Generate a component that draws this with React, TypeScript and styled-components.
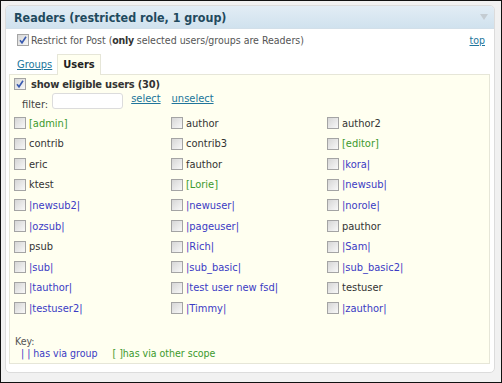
import React from "react";
import styled, { createGlobalStyle } from "styled-components";

const GlobalStyle = createGlobalStyle`
  html, body {
    margin: 0;
    padding: 0;
    background: #000;
  }
  body {
    font-family: "DejaVu Sans Condensed", "DejaVu Sans", Verdana, sans-serif;
    font-stretch: condensed;
  }
`;

const Frame = styled.div`
  box-sizing: border-box;
  width: 502px;
  height: 383px;
  border: 1px solid #111;
  background: #f1f1f1;
  padding: 4px 6px 9px 4px;
  display: flex;
`;

const Panel = styled.div`
  flex: 1;
  border: 1px solid #dcdcdc;
  border-radius: 5px;
  background: #fff;
  display: flex;
  flex-direction: column;
  overflow: hidden;
`;

const Header = styled.div`
  height: 22px;
  display: flex;
  align-items: center;
  justify-content: space-between;
  padding: 0 6px 0 8px;
  background: linear-gradient(#e2edf5, #d0e2ee);
  color: #1f4a5e;
  font-size: 12.4px;
  font-weight: bold;
  border-bottom: 1px solid #d2dfe9;
`;

const Toggle = styled.span`
  width: 0;
  height: 0;
  border-left: 4px solid transparent;
  border-right: 4px solid transparent;
  border-top: 6px solid #c4ccd2;
`;

const Body = styled.div`
  flex: 1;
  display: flex;
  flex-direction: column;
  padding: 3px 4px 8px 3px;
  font-size: 10.5px;
  color: #555;
`;

const RestrictRow = styled.div`
  display: flex;
  align-items: center;
  justify-content: space-between;
  padding: 0 5px 0 8px;
  height: 16px;
`;

const Label = styled.label`
  display: flex;
  align-items: center;
  gap: 2px;
`;

const Strong = styled.b`
  color: #333;
  letter-spacing: -0.3px;
`;

const Link = styled.a`
  color: #21759b;
  text-decoration: underline;
  cursor: pointer;
`;

const Tabs = styled.div`
  display: flex;
  align-items: flex-end;
  margin-top: 6px;
  padding-left: 8px;
  font-size: 11px;
`;

const TabLink = styled(Link)`
  padding: 0 5px 3px 0;
`;

const ActiveTab = styled.div`
  background: #fffff0;
  border: 1px solid #e6e6d8;
  border-bottom: none;
  padding: 3px 5px 4px 5px;
  font-weight: bold;
  color: #222;
  margin-bottom: -1px;
  position: relative;
`;

const Content = styled.div`
  flex: 1;
  background: #fffff0;
  border: 1px solid #e6e6d8;
  padding: 2px 4px 0 4px;
  display: flex;
  flex-direction: column;
`;

const Eligible = styled(Label)`
  font-size: 11px;
  font-weight: bold;
  letter-spacing: -0.2px;
  color: #333;
  gap: 5px;
  height: 14px;
`;

const FilterRow = styled.div`
  display: flex;
  align-items: flex-start;
  padding-left: 8px;
  margin-top: 2px;
  height: 16px;
  font-size: 11px;
`;

const FilterLabel = styled.span`
  margin-top: 5px;
  margin-right: 4px;
  color: #444;
`;

const FilterInput = styled.input`
  box-sizing: border-box;
  width: 71px;
  height: 16px;
  border: 1px solid #dcdcdc;
  border-radius: 3px;
  background: #fff;
  margin: 0 8px 0 0;
`;

const FilterLink = styled(Link)`
  margin-top: -1px;
  margin-right: 11px;
`;

const Grid = styled.div`
  display: grid;
  grid-template-columns: 157px 156px 1fr;
  grid-auto-rows: 20.55px;
  margin-top: 4px;
  font-size: 11px;
`;

const Item = styled.div<{ $kind: "plain" | "group" | "scope" }>`
  display: flex;
  align-items: center;
  gap: 3px;
  color: ${(p) =>
    p.$kind === "group" ? "#3b3bc4" : p.$kind === "scope" ? "#3c9a2e" : "#333"};
`;

const Box = styled.span`
  box-sizing: border-box;
  width: 12px;
  height: 12px;
  border: 1px solid #a4a4a4;
  background: linear-gradient(135deg, #d6d6d6, #f8f8f8);
  display: inline-flex;
  align-items: center;
  justify-content: center;
  flex-shrink: 0;
`;

const Key = styled.div`
  margin-top: auto;
  padding: 0 0 4px 1px;
  font-size: 10.5px;
  color: #555;
  line-height: 12px;
`;

const KeyRow = styled.div`
  display: flex;
  gap: 15px;
  padding-left: 6px;
`;

const KeyGroup = styled.span`
  color: #3b3bc4;
`;

const KeyScope = styled.span`
  color: #3c9a2e;
`;

function Check({ checked }: { checked?: boolean }) {
  return (
    <Box>
      {checked && (
        <svg width="10" height="10" viewBox="0 0 10 10">
          <path d="M2 5.2 L4 7.8 L8 1.8" fill="none" stroke="#3a5bb0" strokeWidth="1.6" />
        </svg>
      )}
    </Box>
  );
}

type Kind = "plain" | "group" | "scope";

const users: [string, Kind][] = [
  ["[admin]", "scope"], ["author", "plain"], ["author2", "plain"],
  ["contrib", "plain"], ["contrib3", "plain"], ["[editor]", "scope"],
  ["eric", "plain"], ["fauthor", "plain"], ["|kora|", "group"],
  ["ktest", "plain"], ["[Lorie]", "scope"], ["|newsub|", "group"],
  ["|newsub2|", "group"], ["|newuser|", "group"], ["|norole|", "group"],
  ["|ozsub|", "group"], ["|pageuser|", "group"], ["pauthor", "plain"],
  ["psub", "plain"], ["|Rich|", "group"], ["|Sam|", "group"],
  ["|sub|", "group"], ["|sub_basic|", "group"], ["|sub_basic2|", "group"],
  ["|tauthor|", "group"], ["|test user new fsd|", "group"], ["testuser", "plain"],
  ["|testuser2|", "group"], ["|Timmy|", "group"], ["|zauthor|", "group"],
];

export default function App() {
  return (
    <>
      <GlobalStyle />
      <Frame>
        <Panel>
          <Header>
            <span>Readers (restricted role, 1 group)</span>
            <Toggle />
          </Header>
          <Body>
            <RestrictRow>
              <Label>
                <Check checked />
                <span>
                  Restrict for Post (<Strong>only</Strong> selected users/groups are Readers)
                </span>
              </Label>
              <Link>top</Link>
            </RestrictRow>
            <Tabs>
              <TabLink>Groups</TabLink>
              <ActiveTab>Users</ActiveTab>
            </Tabs>
            <Content>
              <Eligible>
                <Check checked />
                <span>show eligible users (30)</span>
              </Eligible>
              <FilterRow>
                <FilterLabel>filter:</FilterLabel>
                <FilterInput />
                <FilterLink>select</FilterLink>
                <FilterLink>unselect</FilterLink>
              </FilterRow>
              <Grid>
                {users.map(([name, kind]) => (
                  <Item key={name} $kind={kind}>
                    <Check />
                    <span>{name}</span>
                  </Item>
                ))}
              </Grid>
              <Key>
                <div>Key:</div>
                <KeyRow>
                  <KeyGroup>| |&nbsp;has via group</KeyGroup>
                  <KeyScope>[ ]has via other scope</KeyScope>
                </KeyRow>
              </Key>
            </Content>
          </Body>
        </Panel>
      </Frame>
    </>
  );
}
